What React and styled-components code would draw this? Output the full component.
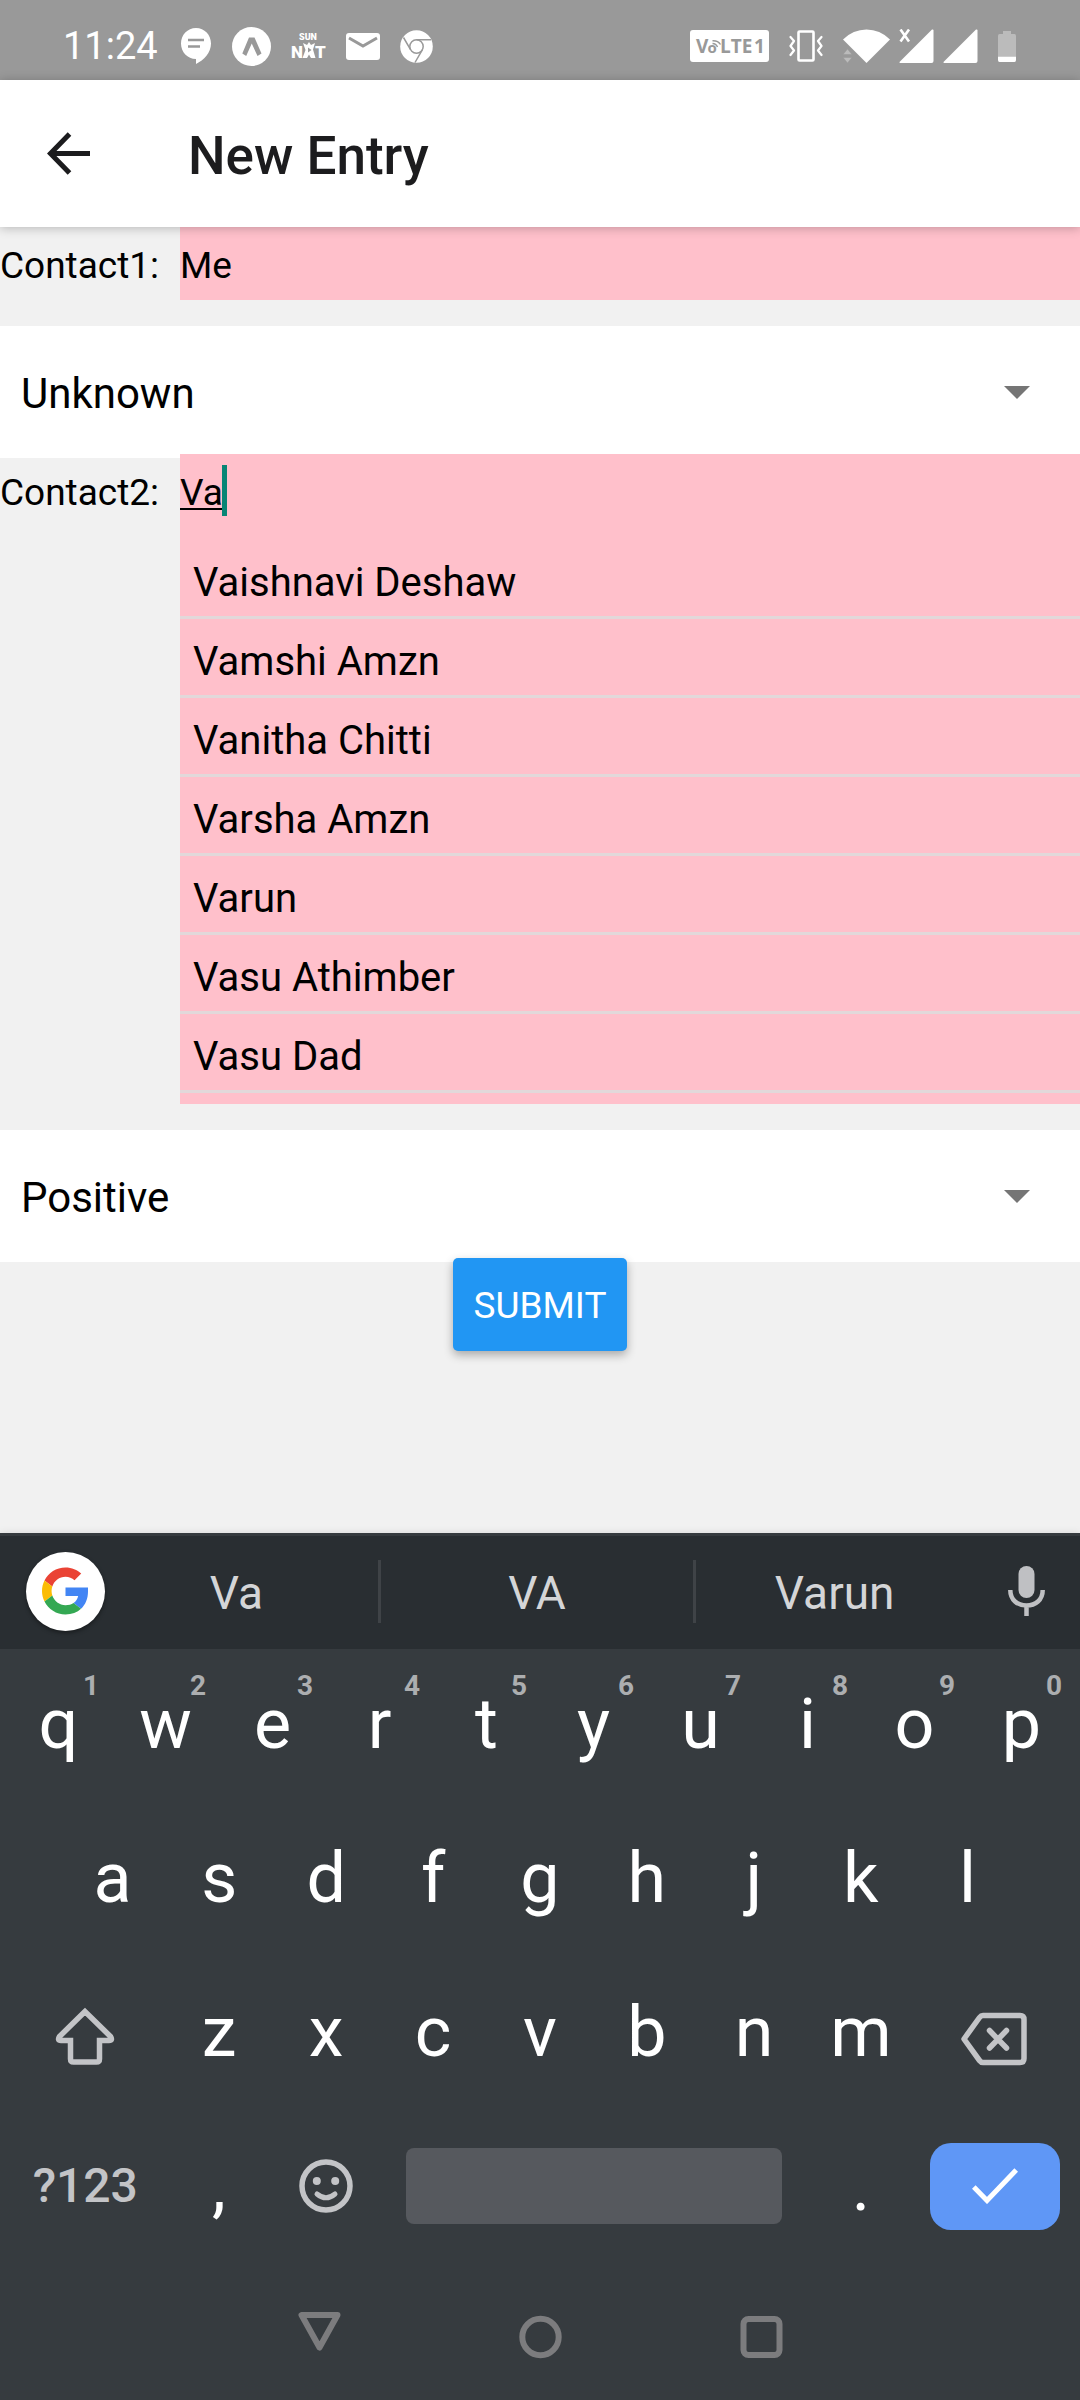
import React from "react";
import styled, { createGlobalStyle } from "styled-components";

const GlobalStyle = createGlobalStyle`
  *, *::before, *::after { box-sizing: border-box; }
  body { margin: 0; background: #f1f1f1; }
  body, button, input, select { font-family: Roboto, "Noto Sans", sans-serif; }
  button { border: 0; padding: 0; margin: 0; background: none; color: inherit; cursor: pointer; }
  svg { display: block; flex: none; }
`;

const Screen = styled.div`
  display: flex;
  flex-direction: column;
  min-height: 100vh;
`;

/* ---------- status bar ---------- */

const StatusBar = styled.div`
  display: flex;
  justify-content: space-between;
  height: 80px;
  padding: 12px 64px 0 63px;
  background: #999;
  color: #fff;
`;

const StatusGroup = styled.div`
  display: flex;
  align-items: center;
  gap: 20px;
`;

const SignalGroup = styled.div`
  display: flex;
  align-items: center;
  gap: 9px;
`;

const Clock = styled.time`
  margin-right: 2px;
  font-size: 38px;
  line-height: 44px;
`;

const ChatIcon = () => (
  <svg width="32" height="36" viewBox="0 0 32 36">
    <path fill="#fff" d="M16 0C7.500 0 1 7 1 15.500C1 24 7.500 31 16 31V36C24 32 31 24.500 31 15.500C31 7 24.500 0 16 0Z" />
    <path stroke="#999" strokeWidth="2.400" d="M8 12H24M8 18.500H20" />
  </svg>
);

const ExpoIcon = () => (
  <svg width="39" height="39" viewBox="0 0 39 39">
    <circle cx="19.500" cy="19.500" r="19.500" fill="#fff" />
    <path fill="#999" d="M17 10.500H22.500L29.500 26.500L25.500 29L19.750 16.500L14.200 29L10.300 26.500Z" />
  </svg>
);

const SunNxtIcon = () => (
  <svg width="35" height="34" viewBox="0 -4 35 34" fontFamily="Roboto, sans-serif" fontWeight="900" fill="#fff">
    <text x="8" y="7" fontSize="9">SUN</text>
    <text x="0" y="25" fontSize="17">N</text>
    <text x="24" y="25" fontSize="17">T</text>
    <path d="M12 10L16 12L18 9L20 12L24 10L22 16.500L24.500 25H20L18 21.500L16 25H11.500L14.500 17Z" />
    <path fill="#999" d="M17 14.500L20.500 17L17 19.500Z" />
  </svg>
);

const MailIcon = () => (
  <svg width="34" height="27" viewBox="0 0 34 27">
    <rect width="34" height="27" rx="3" fill="#fff" />
    <path fill="none" stroke="#999" strokeWidth="3" d="M3 5L17 13L31 5" />
  </svg>
);

const ChromeIcon = () => (
  <svg width="33" height="33" viewBox="0 0 33 33">
    <circle cx="16.500" cy="16.500" r="16.300" fill="#fff" />
    <g fill="none" stroke="#999" strokeWidth="1.500">
      <circle cx="16.500" cy="16.500" r="6.700" />
      <path d="M16.500 9.800H31M10.700 19.800L3.500 7.500M22.300 19.800L15 32.500" />
    </g>
  </svg>
);

const VolteIcon = () => (
  <svg width="79" height="32" viewBox="0 0 79 32" fontFamily="Open Sans, sans-serif" fontWeight="700">
    <rect width="79" height="32" rx="3" fill="#fff" />
    <g fill="#999">
      <text x="6" y="23" fontSize="19">V</text>
      <text x="17.500" y="23" fontSize="15">o</text>
      <text x="30" y="23" fontSize="19">LTE</text>
      <text x="64" y="23" fontSize="19">1</text>
    </g>
    <path fill="none" stroke="#999" strokeWidth="1.400" d="M22.500 13.500Q26 13.500 27.500 17M22.500 10.800Q28 10.500 30.500 14.500" />
  </svg>
);

const VibrateIcon = () => (
  <svg width="34" height="32" viewBox="0 0 34 32" fill="none" stroke="#fff" strokeLinecap="round" strokeLinejoin="round">
    <rect x="9.500" y="1.500" width="15" height="29" rx="1" strokeWidth="2.600" />
    <path strokeWidth="2.200" d="M1.500 7L5 11L1.500 16L5 20.500L1.500 25M32.500 7L29 11L32.500 16L29 20.500L32.500 25" />
  </svg>
);

const WifiIcon = () => (
  <svg width="47" height="34" viewBox="0 0 47 34">
    <path fill="#fff" d="M0 10.500Q10 0.500 23.500 0.500T47 10.500L23.500 34Z" />
    <path fill="#bbb" stroke="#999" strokeWidth="0.500" d="M0 25.500L4.500 20L9 25.500ZM0 28.500L4.500 34L9 28.500Z" />
  </svg>
);

const SignalIcon = ({ crossed }) => (
  <svg width="35" height="34" viewBox="0 0 35 34">
    <path fill="#fff" d="M0.500 33L33 0.500Q34.500 0 34.500 1.500V32Q34.500 34 32.500 34H1.500Q0 34 0.500 33Z" />
    {crossed && <path stroke="#fff" strokeWidth="2.600" d="M1.500 0.500L10 12.500M10 0.500L1.500 12.500" />}
  </svg>
);

const BatteryIcon = () => (
  <svg width="18" height="31" viewBox="0 0 18 31">
    <path fill="#bbb" d="M5 0H13V3H16.500Q18 3 18 5V25H0V5Q0 3 1.500 3H5Z" />
    <path fill="#fff" d="M0 25.500H18V29Q18 31 16.500 31H1.500Q0 31 0 29Z" />
  </svg>
);

/* ---------- app bar ---------- */

const AppBar = styled.header`
  position: relative;
  z-index: 1;
  display: flex;
  align-items: center;
  gap: 98px;
  height: 147px;
  padding: 4px 47px 0;
  background: #fff;
  color: #1c1c1e;
  box-shadow: 0 1px 10px rgba(0, 0, 0, 0.25);
`;

const Title = styled.h1`
  margin: 0;
  font-size: 53px;
  line-height: 62px;
  font-weight: 500;
`;

const BackIcon = () => (
  <svg width="43" height="48" viewBox="0 0 43 48">
    <path fill="none" stroke="currentColor" strokeWidth="5" d="M22.500 2L3.500 21.500L22.500 41M3 21.500H43" />
  </svg>
);

/* ---------- form ---------- */

const Form = styled.form`
  flex: 1;
  display: flex;
  flex-direction: column;
`;

const FieldRow = styled.div`
  position: relative;
  display: grid;
  grid-template-columns: 180px 1fr;
  margin: 0 0 26px;
`;

const FieldLabel = styled.label`
  padding-top: 17px;
  font-size: 37px;
  line-height: 44px;
  color: #000;
`;

const FieldBody = styled.div`
  position: relative;
  background: #ffc0cb;
`;

const TextInput = styled.input`
  display: block;
  width: 100%;
  height: 73px;
  padding: 4px 0 0;
  border: 0;
  border-radius: 0;
  outline: 0;
  background: transparent;
  color: #000;
  font-size: 37px;
  text-decoration: ${(p) => (p.$composing ? "underline 2px" : "none")};
  text-underline-offset: 3px;
`;

const Caret = styled.span`
  position: absolute;
  top: 11px;
  left: 42px;
  width: 5px;
  height: 51px;
  background: #078575;
`;

const Suggestions = styled.ul`
  list-style: none;
  margin: 0;
  padding: 13px 0 11px;
`;

const SuggestionItem = styled.li`
  border-bottom: 3px solid #e2d8da;
`;

const SuggestionButton = styled.button`
  display: block;
  width: 100%;
  height: 76px;
  padding: 9px 13px 0;
  text-align: left;
  color: #000;
  font-size: 40px;
  line-height: 46px;
`;

const PickerBox = styled.div`
  position: relative;
  margin-bottom: -4px;
  background: #fff;
`;

const Picker = styled.select`
  appearance: none;
  display: block;
  width: 100%;
  height: 132px;
  padding: 3px 110px 0 21px;
  border: 0;
  border-radius: 0;
  outline: 0;
  background: transparent;
  color: #000;
  font-size: 42px;
`;

const PickerArrow = styled.span`
  position: absolute;
  top: 60px;
  right: 50px;
  border: 13px solid transparent;
  border-top-color: #757575;
  border-bottom: 0;
  pointer-events: none;
`;

const SubmitButton = styled.button`
  position: relative;
  align-self: center;
  height: 93px;
  padding: 3px 21px 0;
  border-radius: 5px;
  background: #2196f3;
  color: #fff;
  font-size: 37px;
  line-height: 44px;
  box-shadow: 0 4px 10px rgba(0, 0, 0, 0.3);
`;

/* ---------- keyboard ---------- */

const Keyboard = styled.section`
  border-top: 3px solid #363b3f;
  background: #363b3f;
  color: #fff;
  box-shadow: 0 0 8px rgba(0, 0, 0, 0.1);
`;

const CandidateBar = styled.div`
  display: grid;
  grid-template-columns: 95px 47fr 3px 52fr 3px 46fr 107px;
  align-items: center;
  height: 113px;
  padding-bottom: 3px;
  background: #292e32;
`;

const GoogleButton = styled.button`
  display: flex;
  align-items: center;
  justify-content: center;
  width: 79px;
  height: 79px;
  margin-left: 26px;
  border-radius: 50%;
  background: #fff;
  box-shadow: 0 2px 4px rgba(0, 0, 0, 0.4);
`;

const Candidate = styled.button`
  height: 100%;
  padding-top: 3px;
  color: #d4d5d7;
  font-size: 46px;
  line-height: 54px;
`;

const Divider = styled.span`
  height: 63px;
  background: #3f4347;
`;

const MicButton = styled.button`
  display: flex;
  justify-content: center;
`;

const Keys = styled.div`
  margin-top: -2px;
`;

const KeyRow = styled.div`
  display: grid;
  grid-template-columns: ${(p) => p.$columns};
  height: 154px;
  padding: 0 ${(p) => (p.$inset ? 59 : 5)}px;
`;

const Key = styled.button`
  position: relative;
  display: flex;
  align-items: center;
  justify-content: center;
  font-size: 70px;
  line-height: 82px;
`;

const ModeKey = styled(Key)`
  color: #c3c4c7;
  font-size: 48px;
  font-weight: 500;
`;

const KeyHint = styled.span`
  position: absolute;
  top: 22px;
  right: 13px;
  color: #acaeb0;
  font-size: 28px;
  line-height: 34px;
  font-weight: 700;
`;

const SpaceKey = styled.button`
  grid-column: span 4;
  align-self: center;
  height: 76px;
  margin: 0 26px;
  border-radius: 8px;
  background: #56595e;
`;

const EnterKey = styled.button`
  display: flex;
  align-items: center;
  justify-content: center;
  align-self: center;
  height: 87px;
  margin: 0 15px;
  border-radius: 21px;
  background: #5f97f6;
`;

const NavBar = styled.nav`
  display: flex;
  align-items: center;
  justify-content: center;
  gap: 178px;
  height: 137px;
  padding-top: 11px;
`;

const GoogleLogo = () => (
  <svg width="47" height="48" viewBox="0 0 48 48">
    <path fill="#EA4335" d="M24 9.500c3.540 0 6.710 1.220 9.210 3.600l6.850-6.850C35.900 2.380 30.470 0 24 0 14.620 0 6.510 5.380 2.560 13.220l7.980 6.190C12.430 13.720 17.740 9.500 24 9.500z" />
    <path fill="#4285F4" d="M46.980 20.500H24v8.500h12.940c-.580 2.960-2.260 5.480-4.780 7.180l7.730 6C44.400 38 46.980 31.840 46.980 24.550z" />
    <path fill="#FBBC05" d="M10.530 28.590c-.480-1.450-.760-2.990-.760-4.590s.270-3.140.760-4.590l-7.980-6.190C.920 16.460 0 20.120 0 24c0 3.880.920 7.540 2.560 10.780l7.970-6.190z" />
    <path fill="#34A853" d="M24 48c6.480 0 11.930-2.130 15.890-5.810l-7.730-6c-2.150 1.450-4.920 2.300-8.160 2.300-6.260 0-11.570-4.220-13.470-9.910l-7.980 6.190C6.510 42.620 14.620 48 24 48z" />
  </svg>
);

const MicIcon = () => (
  <svg width="37" height="50" viewBox="0 0 37 50">
    <rect x="10.500" y="0" width="16" height="32" rx="8" fill="#bfc0c3" />
    <path fill="none" stroke="#bfc0c3" strokeWidth="4.500" d="M2.300 24C2.300 34 9.500 39.500 18.500 39.500S34.700 34 34.700 24M18.500 39V50" />
  </svg>
);

const ShiftIcon = () => (
  <svg width="60" height="76" viewBox="0 0 60 76" fill="none" stroke="#c3c4c7" strokeWidth="5.500">
    <path d="M30 17.500L4.500 42.500Q2 46.500 6 46.500H15.500V65Q15.500 68 18.500 68H41.500Q44.500 68 44.500 65V46.500H54Q58 46.500 55.500 42.500Z" />
  </svg>
);

const BackspaceIcon = () => (
  <svg width="68" height="76" viewBox="1 0 68 76" fill="none" stroke="#c3c4c7" strokeWidth="5.500" strokeLinecap="round" strokeLinejoin="round">
    <path d="M23 21.500H60Q64 21.500 64 25.500V64.500Q64 68.500 60 68.500H23Q21 68.500 19.500 66.500L4 45L19.500 23.500Q21 21.500 23 21.500Z" />
    <path d="M29.500 36.500L46.500 54M46.500 36.500L29.500 54" />
  </svg>
);

const SmileIcon = () => (
  <svg width="54" height="54" viewBox="0 0 54 54" fill="none" stroke="#c3c4c7" strokeLinecap="round">
    <circle cx="27" cy="27" r="24" strokeWidth="5.500" />
    <path strokeWidth="5" d="M18 35Q27 42.500 36 35" />
    <g fill="#c3c4c7" stroke="none">
      <circle cx="17.800" cy="22" r="4" />
      <circle cx="36.200" cy="22" r="4" />
    </g>
  </svg>
);

const CheckIcon = () => (
  <svg width="46" height="36" viewBox="0 0 46 36">
    <path fill="none" stroke="#fff" strokeWidth="5" d="M1.800 19L15 32.500L44.200 2" />
  </svg>
);

const NavIcon = ({ children }) => (
  <svg width="43" height="54" viewBox="0 0 43 54" fill="none" stroke="#7c7c7e" strokeWidth="6" strokeLinejoin="round">
    {children}
  </svg>
);

const CONTACTS = [
  "Vaishnavi Deshaw",
  "Vamshi Amzn",
  "Vanitha Chitti",
  "Varsha Amzn",
  "Varun",
  "Vasu Athimber",
  "Vasu Dad",
];

export default function App() {
  return (
    <Screen>
      <GlobalStyle />
      <StatusBar>
        <StatusGroup>
          <Clock>11:24</Clock>
          <ChatIcon />
          <ExpoIcon />
          <SunNxtIcon />
          <MailIcon />
          <ChromeIcon />
        </StatusGroup>
        <StatusGroup>
          <VolteIcon />
          <VibrateIcon />
          <SignalGroup>
            <WifiIcon />
            <SignalIcon crossed />
            <SignalIcon />
          </SignalGroup>
          <BatteryIcon />
        </StatusGroup>
      </StatusBar>

      <AppBar>
        <button type="button" aria-label="Back">
          <BackIcon />
        </button>
        <Title>New Entry</Title>
      </AppBar>

      <Form onSubmit={(e) => e.preventDefault()}>
        <FieldRow>
          <FieldLabel htmlFor="contact1">Contact1:</FieldLabel>
          <FieldBody>
            <TextInput id="contact1" defaultValue="Me" />
          </FieldBody>
        </FieldRow>
        <PickerBox>
          <Picker aria-label="Contact1 status" defaultValue="Unknown">
            <option>Unknown</option>
            <option>Positive</option>
            <option>Negative</option>
          </Picker>
          <PickerArrow />
        </PickerBox>

        <FieldRow>
          <FieldLabel htmlFor="contact2">Contact2:</FieldLabel>
          <FieldBody>
            <TextInput id="contact2" defaultValue="Va" spellCheck={false} autoComplete="off" $composing />
            <Caret />
            <Suggestions>
              {CONTACTS.map((name) => (
                <SuggestionItem key={name}>
                  <SuggestionButton type="button">{name}</SuggestionButton>
                </SuggestionItem>
              ))}
            </Suggestions>
          </FieldBody>
        </FieldRow>
        <PickerBox>
          <Picker aria-label="Contact2 status" defaultValue="Positive">
            <option>Unknown</option>
            <option>Positive</option>
            <option>Negative</option>
          </Picker>
          <PickerArrow />
        </PickerBox>

        <SubmitButton type="submit">SUBMIT</SubmitButton>
      </Form>

      <Keyboard>
        <CandidateBar>
          <GoogleButton type="button" aria-label="Google">
            <GoogleLogo />
          </GoogleButton>
          <Candidate type="button">Va</Candidate>
          <Divider />
          <Candidate type="button">VA</Candidate>
          <Divider />
          <Candidate type="button">Varun</Candidate>
          <MicButton type="button" aria-label="Voice input">
            <MicIcon />
          </MicButton>
        </CandidateBar>

        <Keys>
          <KeyRow $columns="repeat(10, 1fr)">
            {[..."qwertyuiop"].map((letter, i) => (
              <Key type="button" key={letter}>
                {letter}
                <KeyHint>{(i + 1) % 10}</KeyHint>
              </Key>
            ))}
          </KeyRow>
          <KeyRow $columns="repeat(9, 1fr)" $inset>
            {[..."asdfghjkl"].map((letter) => (
              <Key type="button" key={letter}>{letter}</Key>
            ))}
          </KeyRow>
          <KeyRow $columns="3fr repeat(7, 2fr) 3fr">
            <Key type="button" aria-label="Shift"><ShiftIcon /></Key>
            {[..."zxcvbnm"].map((letter) => (
              <Key type="button" key={letter}>{letter}</Key>
            ))}
            <Key type="button" aria-label="Backspace"><BackspaceIcon /></Key>
          </KeyRow>
          <KeyRow $columns="3fr repeat(7, 2fr) 3fr">
            <ModeKey type="button">?123</ModeKey>
            <Key type="button">,</Key>
            <Key type="button" aria-label="Emoji"><SmileIcon /></Key>
            <SpaceKey type="button" aria-label="Space" />
            <Key type="button">.</Key>
            <EnterKey type="button" aria-label="Done"><CheckIcon /></EnterKey>
          </KeyRow>
        </Keys>

        <NavBar>
          <button type="button" aria-label="Back">
            <NavIcon><path d="M3.500 5H39.500L21.500 37.500Z" /></NavIcon>
          </button>
          <button type="button" aria-label="Home">
            <NavIcon><circle cx="21.500" cy="27" r="18.200" /></NavIcon>
          </button>
          <button type="button" aria-label="Recent apps">
            <NavIcon><rect x="3.500" y="9" width="36" height="36" rx="5" /></NavIcon>
          </button>
        </NavBar>
      </Keyboard>
    </Screen>
  );
}
